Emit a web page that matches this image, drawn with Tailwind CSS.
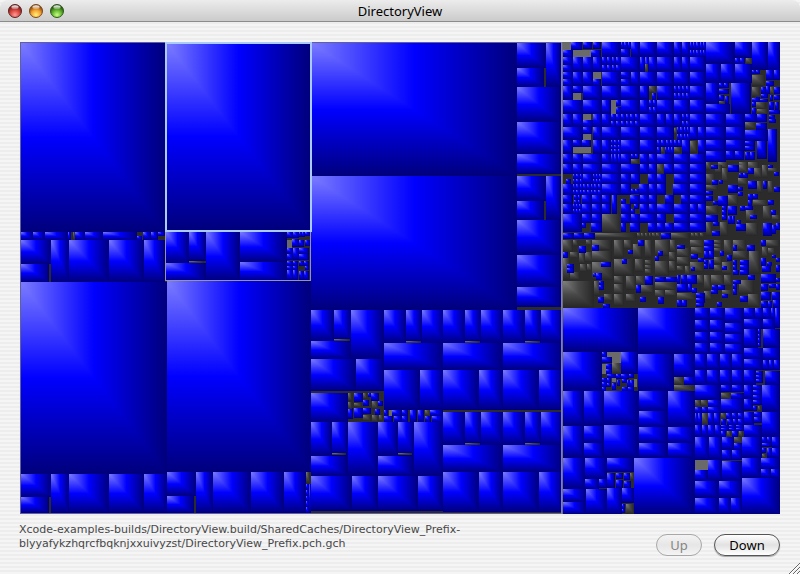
<!DOCTYPE html>
<html lang="en">
<head>
<meta charset="utf-8">
<meta name="viewport" content="width=device-width, initial-scale=1">
<title>DirectoryView</title>
<script src="https://cdn.jsdelivr.net/npm/@tailwindcss/browser@4"></script>
</head>
<body class="bg-white">
<div class="relative flex min-h-screen flex-col bg-[repeating-linear-gradient(to_bottom,#f5f5f5_0_2px,#ededed_2px_4px)] font-['DejaVu_Sans',sans-serif]">
  <header class="relative flex h-[22px] items-center justify-center rounded-t-lg border-b border-[#8c8c8c] bg-linear-to-b from-[#ececec] to-[#cbcbcb]">
    <div class="absolute left-2 top-1 flex gap-[7px]">
      <button type="button" aria-label="Close" class="size-3.5"><svg viewBox="0 0 14 14" class="block size-3.5"><circle cx="7" cy="7" r="6.5" fill="url(#red)" stroke="#5b2524"/><ellipse cx="7" cy="3.2" rx="3.6" ry="1.9" fill="url(#shine)"/></svg></button>
      <button type="button" aria-label="Minimize" class="size-3.5"><svg viewBox="0 0 14 14" class="block size-3.5"><circle cx="7" cy="7" r="6.5" fill="url(#amber)" stroke="#7a4a1c"/><ellipse cx="7" cy="3.2" rx="3.6" ry="1.9" fill="url(#shine)"/></svg></button>
      <button type="button" aria-label="Zoom" class="size-3.5"><svg viewBox="0 0 14 14" class="block size-3.5"><circle cx="7" cy="7" r="6.5" fill="url(#green)" stroke="#2f5a1a"/><ellipse cx="7" cy="3.2" rx="3.6" ry="1.9" fill="url(#shine)"/></svg></button>
    </div>
    <h1 class="font-['Noto_Sans',sans-serif] text-[13px] leading-5 text-black">DirectoryView</h1>
  </header>
  <main class="flex grow flex-col px-5 pt-5">
    <svg id="treemap" role="img" aria-label="Disk usage treemap" viewBox="20 42 760 472" class="block h-auto w-full">
      <defs>
        <linearGradient id="bx"><stop stop-color="#7c7cff"/><stop offset=".5" stop-color="#0000ff"/><stop offset="1" stop-color="#00007c"/></linearGradient>
        <linearGradient id="by" x2="0" y2="1"><stop stop-color="#7c7cff"/><stop offset=".5" stop-color="#0000ff"/><stop offset="1" stop-color="#00007c"/></linearGradient>
        <linearGradient id="gx"><stop stop-color="#808080"/><stop offset=".5" stop-color="#484848"/><stop offset="1" stop-color="#262626"/></linearGradient>
        <linearGradient id="gy" x2="0" y2="1"><stop stop-color="#808080"/><stop offset=".5" stop-color="#484848"/><stop offset="1" stop-color="#262626"/></linearGradient>
        <radialGradient id="red" cx=".5" cy=".8" r=".75"><stop stop-color="#ff9c96"/><stop offset=".5" stop-color="#d9453f"/><stop offset="1" stop-color="#5e1512"/></radialGradient>
        <radialGradient id="amber" cx=".5" cy=".8" r=".75"><stop stop-color="#fff27c"/><stop offset=".5" stop-color="#f5a12e"/><stop offset="1" stop-color="#6e3208"/></radialGradient>
        <radialGradient id="green" cx=".5" cy=".8" r=".75"><stop stop-color="#c8ff86"/><stop offset=".5" stop-color="#61b52d"/><stop offset="1" stop-color="#173e08"/></radialGradient>
        <linearGradient id="shine" x2="0" y2="1"><stop stop-color="#fff"/><stop offset="1" stop-color="#fff" stop-opacity=".25"/></linearGradient>
      </defs>
      <rect x="20" y="42" width="760" height="472" fill="#2b2b2b"/>
      <g id="tiles" shape-rendering="crispEdges"></g>
      <g fill="none" shape-rendering="crispEdges">
        <rect x="20.5" y="42.5" width="541" height="471" stroke="#6060a0"/>
        <path d="M561.5 42V514" stroke="#8080b0"/>
        <path d="M562.5 42V514" stroke="#70707c"/>
        <rect x="165.5" y="42.5" width="145" height="238" stroke="#9494a4"/>
        <rect x="166" y="43" width="145" height="188" stroke="#a9cbff" stroke-width="2"/>
      </g>
    </svg>
    <footer class="flex items-start justify-between gap-4 pt-2 pb-[18px]">
      <p class="-ml-px pt-px text-[11px] leading-3.5 text-[#484848]">Xcode-examples-builds/DirectoryView.build/SharedCaches/DirectoryView_Prefix-<br>blyyafykzhqrcfbqknjxxuivyzst/DirectoryView_Prefix.pch.gch</p>
      <div class="flex shrink-0 gap-3 pt-3 font-['Noto_Sans',sans-serif] text-[13px] leading-5">
        <button type="button" disabled class="flex h-[22px] w-[46px] items-center justify-center rounded-full border border-[#a8a8a8] bg-linear-to-b from-[#f4f4f4] via-[#e6e6e6] to-[#f4f4f4] text-[#858585]">Up</button>
        <button type="button" class="flex h-[22px] w-[66px] items-center justify-center rounded-full border border-[#555] bg-linear-to-b from-white via-[#e2e2e2] to-white text-black shadow-[0_1px_1px_#0005]">Down</button>
      </div>
    </footer>
  </main>
  <svg viewBox="0 0 12 12" class="absolute right-0 bottom-0 size-3" aria-hidden="true"><path d="M1 12L12 1M5 12L12 5M9 12L12 9" stroke="#666" fill="none"/><path d="M2 12L12 2M6 12L12 6M10 12L12 10" stroke="#fff" fill="none"/></svg>
</div>
<script>
const layer = document.getElementById('tiles');
let markup = '';

// kinds: b = file of the main type, g = other files, l = light grey, k = empty
function tile(kind, x0, y0, x1, y1) {
  x0 = Math.round(x0); y0 = Math.round(y0); x1 = Math.round(x1); y1 = Math.round(y1);
  const w = x1 - x0, h = y1 - y0;
  if (kind === 'k' || w < 1 || h < 1) return;
  if (kind === 'l') {
    markup += `<rect x="${x0}" y="${y0}" width="${w}" height="${h}" fill="#6a6a6a"/>`;
    return;
  }
  markup += `<rect x="${x0}" y="${y0}" width="${w}" height="${h}" fill="url(#${kind}y)"/>`
    + `<path d="M${x0} ${y0}H${x1}V${y1}z" fill="url(#${kind}x)"/>`;
}

// One entry per ';': x0 y0 x1 y1 [columns rows]
function tiles(kind, list, ox = 0, oy = 0, unit = 1) {
  for (const item of list.split(';')) {
    const n = item.trim().split(/\s+/).map(Number);
    if (n.length < 4) continue;
    const [x0, y0, x1, y1, cols = 1, rows = 1] = n;
    const w = (x1 - x0) / cols, h = (y1 - y0) / rows;
    for (let r = 0; r < rows; r++) for (let c = 0; c < cols; c++)
      tile(kind, ox + (x0 + c * w) * unit, oy + (y0 + r * h) * unit,
        ox + (x0 + (c + 1) * w) * unit, oy + (y0 + (r + 1) * h) * unit);
  }
}

// Row of tiles: start positions with an optional kind letter and optional /columns/rows, ending with the right edge
function row(y0, y1, spec) {
  const parts = spec.split(' ');
  for (let i = 0; i < parts.length - 1; i++) {
    const m = parts[i].match(/^(\d+)([bgkl]?)(?:\/(\d+)\/(\d+))?$/);
    tiles(m[2] || 'b', `${m[1]} ${y0} ${parseInt(parts[i + 1])} ${y1} ${m[3] || 1} ${m[4] || 1}`);
  }
}

// Left folders
tiles('b', `21 43 165 232;167 43 310 230;21 282 167 474;167 281 311 472;
21 240 51 264;21 264 49 282;51 240 69 282;69 240 109 282;109 240 144 282;144 240 165 282;
166 232 189 263;189 232 206 261;166 263 206 281;206 232 240 281;240 232 287 262;240 262 287 281;
21 474 51 497;21 497 49 513;51 474 69 513;69 474 109 513;109 474 144 513;144 474 167 513;
167 472 196 496;167 496 194 513;196 472 213 513;213 472 251 513;251 472 284 513;284 472 306 513;306 484 309 513 1 5;309 484 311 513`);
row(232, 240, '21 33 45 68 71k 73g 75 85 103 137k 143 151 158k 165');
tiles('b', '158 232 165 236;137 236 142 240;287 232 293 238;293 232 299 238;299 232 305 237 2 1;305 232 310 236;292 239 299 247;299 240 304 247;305 240 310 246;287 248 293 260 1 2;293 248 299 260;299 248 309 260 1 2;287 261 298 270 2 2;299 261 309 266 2 1;287 270 298 280 2 1;299 271 309 280 2 1;305 266 309 270');
tiles('l', '287 240 292 248');
tiles('g', '189 261 204 263;306 472 310 484');

// Middle folder
tiles('b', `311 43 517 176;311 176 517 310`);
for (const y of [43, 176]) {
  tiles('b', '517 0 546 25;517 25 544 44;546 0 561 44;517 44 561 79;517 79 561 111;517 111 561 131', 0, y);
}
for (const [x, y] of [[384, 310], [443, 310], [503, 310], [443, 412], [503, 412]]) {
  tiles('b', '0 0 22 33;22 0 38 33;38 0 60 33;0 33 60 60;0 60 36 100;36 60 60 100', x, y);
  tiles('g', '22 31 37 33', x, y);
}
tiles('b', `311 310 334 341;334 310 351 341;311 341 351 359;351 310 384 359;311 359 356 391;356 359 384 391;311 393 348 422;
311 422 332 456;332 422 348 456;311 456 348 476;348 422 378 476;378 422 398 456;398 422 414 456;378 456 414 476;414 422 443 476;
311 476 352 511;352 476 378 511;378 476 418 511;418 476 443 511;
384 410 388 416;392 410 402 416;402 410 408 416;410 410 417 422;418 410 424 422;430 410 443 416;384 416 393 422;394 416 402 422;402 416 408 422;425 416 431 422;432 416 443 422;
354 393 363 402;368 393 371 397;371 393 379 401;363 400 369 406;378 401 383 406;348 408 353 419;354 408 363 418;363 408 371 414;375 409 380 415`);
tiles('g', '348 393 352 401;363 393 367 399;372 401 378 409;348 402 352 409;372 415 378 422;379 415 383 421;354 403 362 407;363 415 371 421;425 410 430 416;334 339 350 341;332 453 346 455;398 453 412 455');
tiles('l', '389 410 392 416');

// Dense folder, upper left
row(42, 57, '563k 602 621k 631 640 657 674 682 690/5/2 706');
tiles('b', '571 42 582 50;583 42 592 49;593 42 601 49;563 50 573 57;591 50 601 57;621 42 631 49 3 1;621 49 630 57');
tiles('l', '563 42 571 50;573 50 591 57');
row(57, 72, '563/1/2 573 583 593 602/4/2 621 640/2/1 649 657 674 682 690 706');
row(72, 86, '563/1/2 573 583 593k 602 621/1/2 631 640 657 674 690 706');
tiles('l', '593 72 601 79;573 93 581 100;611 100 616 114;583 114 591 120;583 134 591 140;573 147 591 153');
tiles('b', '593 79 601 86;573 86 583 93;616 100 621 106;616 107 621 114;583 120 593 127;583 127 592 134;573 140 591 147 2 1;652 93 656 100');
tiles('g', '645 64 648 72;649 86 656 93;674 128 677 134;661 147 664 153;674 147 681 153;690 141 697 153;631 159 639 164;657 164 664 174;602 214 621 233');
row(86, 100, '563 573k 583 602 621 640 649k 657 674/4/2 690 706');
row(100, 114, '563 583 602 611k 621 640 649/2/2 657 674 690 706');
row(114, 127, '563 573 583k 593 602 611/6/2 640 657 666 674 682/2/2 690 706');
row(127, 140, '563 583k 593 602 621 640 657 674k 677/4/2 690 698 706');
row(140, 154, '563 573k 593 602 611/3/3 621 640 657k 682 690k 698 706');
tiles('b', '657 140 674 147 4 1;657 147 661 154;665 147 674 154 3 1;674 140 682 147 2 1');
row(154, 164, '563 573 583 602 611/3/1 621 631k 640 649 657 674 690 706');
tiles('b', '631 154 639 159 2 1');
row(164, 174, '563 573 583 602 621 640 649 657k 664 674 690 706');
row(174, 184, '563k 573/3/2 583 593/3/2 602 621 631 640k 648 657 666k 674 690 706');
row(184, 195, '563 573/3/2 583/5/2 602 621 631k 639 649 657 666k 673 690 706');
row(195, 204, '563 573k 582 592 602 611k 630 640 649 657k 665 674k 681 690 706');
row(204, 214, '563 573/3/2 582 592 602 611k 621 631k 640 649 657 674 690 698 706');
tiles('b', '566 179 571 184;574 195 581 204 2 2;612 195 617 214;621 199 626 204;631 189 639 194 2 1;634 204 639 209;631 209 635 214;563 214 582 232;582 223 586 228');
row(214, 223, '582 592 602k 621 631 640 657 666k 674 690 706');
row(223, 232, '582k 591 602k 621 626k 630 640k 648 657 665 674 690 706');

// Dense folder, upper right
tiles('b', `706 42 735 64;735 42 752 58;735 58 745 64 2 1;752 42 768 70;768 42 780 72;706 64 721 83;721 64 735 83;735 64 752 83;
706 83 719 104;719 83 729 88 2 1;719 89 729 94 1 1;719 95 724 101;725 96 729 104;706 104 730 114;731 83 751 114;
706 114 726 127;726 114 745 127;745 114 757 122;757 114 767 122;756 123 767 130;745 130 768 141;706 127 726 140;726 127 745 140;
706 140 726 151;726 140 745 151;745 141 755 151 1 2;757 141 767 159;768 129 777 162;706 151 726 162;726 151 735 160;735 151 744 160;745 152 755 160 2 1`);
tiles('g', '746 58 752 64;745 122 756 129;719 101 725 104');
tiles('b', '590 105 602 118;604 105 616 118;633 105 656 134;657 105 674 134;633 138 658 154;617 156 632 178;632 154 644 176;657 156 674 176;603 180 616 192;617 178 640 190;590 190 614 200;614 192 640 202;644 180 655 198;657 180 674 196;590 202 602 216;590 220 602 236;641 202 657 224;659 200 672 224;641 226 674 237;641 240 660 252;641 253 664 264', 555, 35, 1 / 3);
tiles('g', '590 120 630 152;590 156 614 186;603 202 634 222;606 222 640 238;645 156 657 178;453 382 468 405;489 382 518 400;551 382 578 400;579 382 612 405', 555, 35, 1 / 3);

// Small mixed files
tiles('g', `453 28 480 56;480 0 500 24;500 10 518 50;551 0 578 22;596 8 620 40;549 40 578 60;606 48 622 84;638 48 655 86;638 10 670 20;
453 59 490 76;453 122 490 148;453 172 470 212;495 172 518 212;572 135 600 172;572 174 608 212;594 104 638 122;624 123 648 165;650 150 674 164;519 90 548 120;620 0 638 40;
119 204 245 220;246 204 257 216;258 204 268 216;269 204 279 216;281 204 288 216;291 204 303 216;303 204 315 216;348 204 405 221;407 204 420 216;421 204 432 216;434 204 446 215;
24 226 54 262;54 226 70 244;92 226 110 240;110 226 170 256;72 262 90 298;90 262 113 292;112 258 172 290;46 262 72 280;24 280 46 345;46 322 76 345;76 296 96 320;96 296 112 318;112 292 176 345;
177 225 206 280;206 225 232 252;234 238 262 280;270 225 292 280;300 225 344 272;344 225 362 262;177 282 238 332;239 282 268 320;270 285 290 326 1 3;300 288 341 332;341 262 364 288;341 288 364 320;
177 333 208 358;177 358 208 386;177 386 208 424;212 333 242 376;212 386 242 412;242 333 270 360;258 360 298 384;300 350 365 374;300 374 330 396;330 374 365 392;24 347 116 428;116 347 134 392;146 386 175 408;
366 250 404 276;366 276 404 300;406 225 446 246;408 246 446 266;366 302 388 318;390 302 404 330;406 290 446 320;366 384 422 404;477 225 502 262 1 3;477 275 502 298;477 300 502 322;507 225 532 268;502 290 530 328;
534 225 574 256;534 258 580 282;582 258 614 326;446 330 468 376;468 330 506 360;506 330 532 364;552 346 596 386;426 330 446 356;448 378 470 404;500 374 532 390;580 386 616 426;634 225 674 246;620 246 640 276;640 248 660 268`, 555, 165, 1 / 3);
tiles('b', `468 0 488 11;519 0 551 22;579 9 596 26;551 25 563 38;565 25 578 38;638 0 655 8;656 20 673 33;471 45 490 59;491 45 505 57;519 60 548 84;579 48 606 72;624 48 637 72;656 66 674 80;
453 78 473 91;453 93 473 108;473 107 488 121;488 92 518 122;549 66 563 79;549 82 563 93;579 87 594 104;594 87 608 102;579 104 590 122;640 105 656 120;519 123 545 150;555 122 570 137;570 122 593 134;501 122 517 164 1 3;519 152 541 176 2 1;
453 150 490 170;586 150 605 161;473 171 492 184;543 178 572 197;546 164 557 177;471 198 494 214;624 174 650 214;652 181 662 208;662 174 674 194;648 135 662 150;
24 204 56 221;57 204 86 221;87 204 119 221;317 204 347 221;71 243 92 264;110 240 131 257;24 261 38 278;36 297 56 323 1 2;138 291 167 307;249 225 268 242;218 255 233 267;309 259 323 272;299 274 312 288;201 282 215 296;
113 323 126 336;124 323 140 345;131 347 146 374 1 2;129 396 147 413;144 417 165 428;269 333 294 359;243 360 257 384;256 396 272 410;309 396 326 416;300 335 365 350 2 1;366 240 389 251;408 268 429 281;429 280 447 292;
447 226 476 242;447 243 476 257;447 258 476 282 2 1;447 284 460 312 1 2;461 284 476 312;494 258 506 272;516 269 532 287;534 240 545 258;576 239 601 257;534 285 546 315 1 2;534 315 552 330;556 285 581 329 1 3;408 305 420 318;502 303 516 316;
366 330 376 356;377 330 396 356;397 330 425 356;366 357 398 382;398 357 412 382;412 370 426 383;366 406 396 427 2 1;424 383 449 413 1 2;424 413 446 427;468 375 488 388;472 360 490 375;490 360 510 374;500 386 518 398;486 411 502 427;
534 344 558 358;534 358 545 372;534 372 545 390;556 393 578 410;579 330 600 344;618 226 633 242;618 279 634 303;636 290 650 304;622 304 648 320;618 327 662 354;618 356 640 378;642 356 662 370;664 340 674 352;664 356 674 374;
618 381 648 406;650 381 674 404;618 408 640 428;640 408 652 428;654 406 674 428;650 270 662 280;664 280 674 290;664 300 674 320`, 555, 165, 1 / 3);

// Lower right folders
tiles('l', '156 155 197 190;141 192 154 222;170 235 183 247;236 236 245 262;420 480 459 510', 555, 300, 1 / 3);
tiles('g', '357 231 387 254;357 254 419 272;171 190 202 221;225 518 236 540;213 611 236 641;498 278 527 298;420 300 438 320;438 300 458 318;608 318 618 334;441 338 458 374;498 340 512 358;537 411 560 430;516 393 528 410;552 393 565 410;621 461 634 474', 555, 300, 1 / 3);
tiles('b', `24 24 249 155;249 24 420 162;24 155 141 273;249 162 357 273;357 162 420 231;388 231 420 254;
141 155 155 172;141 172 171 190;197 155 248 221;154 192 171 221 1 2;156 222 184 234;156 234 168 248;141 234 155 260 1 2;155 248 168 260;170 248 184 270;184 222 198 238;198 222 222 236;222 222 236 234;185 240 196 258;200 236 215 250;215 240 236 260 2 1;200 260 218 272;220 262 236 272;141 262 153 272;
24 273 87 378;87 273 147 378;147 273 252 375;252 273 339 332;252 332 339 380;339 273 420 380;24 378 87 473;87 378 147 428;87 428 147 473;147 375 252 473;252 380 339 428;252 428 339 473;339 380 420 428;339 428 420 473;
24 473 90 566;90 473 156 537;156 473 237 517;90 537 131 566;131 537 156 563;156 518 181 563;182 518 205 538;207 518 224 540;182 540 205 563;207 542 228 563;24 566 93 605;24 605 93 642;93 566 156 642;156 563 201 642;201 563 237 610;201 611 210 640 1 2;237 473 420 642;
420 24 465 60;465 24 510 60;510 24 567 69;567 24 600 57;600 24 624 57;624 24 648 57;648 24 660 57;660 24 675 84;567 57 624 87;624 57 660 87;
420 60 465 96;465 60 510 96;510 69 567 102;420 96 465 129;465 96 510 129;510 102 567 132;420 129 465 162;465 129 510 162;510 132 567 162;567 87 609 144;609 87 618 141 1 4;624 87 675 144;567 144 624 177;624 144 675 180;567 177 624 210;624 180 675 210 3 1;
420 162 567 209 4 1;420 209 567 254 4 1;567 210 602 254;602 212 623 250 1 3;629 212 675 254;
420 254 498 299;498 254 530 276;530 254 567 276;528 278 567 298;567 254 594 298;594 254 620 316 1 4;621 254 675 335;460 300 498 320;420 321 460 338 2 1;460 321 498 338;498 298 567 338;567 298 594 334;594 318 607 334;
420 338 440 374 2 1;460 338 496 374 2 1;514 338 530 356;532 338 566 358 2 1;498 358 514 374;516 358 566 374 3 1;567 336 597 374;597 336 620 368 1 2;621 335 675 411;420 374 498 411 4 1;498 374 566 392 3 2;498 393 514 410;530 393 550 410;567 374 621 411;
420 411 462 480;462 411 501 480;501 411 537 450;537 430 561 450;501 450 531 480;531 450 561 480;561 411 621 475;621 411 650 428 2 1;652 411 675 443;621 430 650 442;621 443 634 460;635 443 650 474;652 443 675 474;
420 511 460 543;460 480 501 543;501 482 561 543;561 475 618 533;618 475 675 507;618 507 647 533;647 507 675 533;420 543 492 594;492 543 561 594;420 594 492 642;492 594 528 642;528 594 561 642;561 533 675 642`, 555, 300, 1 / 3);

layer.innerHTML = markup;
</script>
</body>
</html>
